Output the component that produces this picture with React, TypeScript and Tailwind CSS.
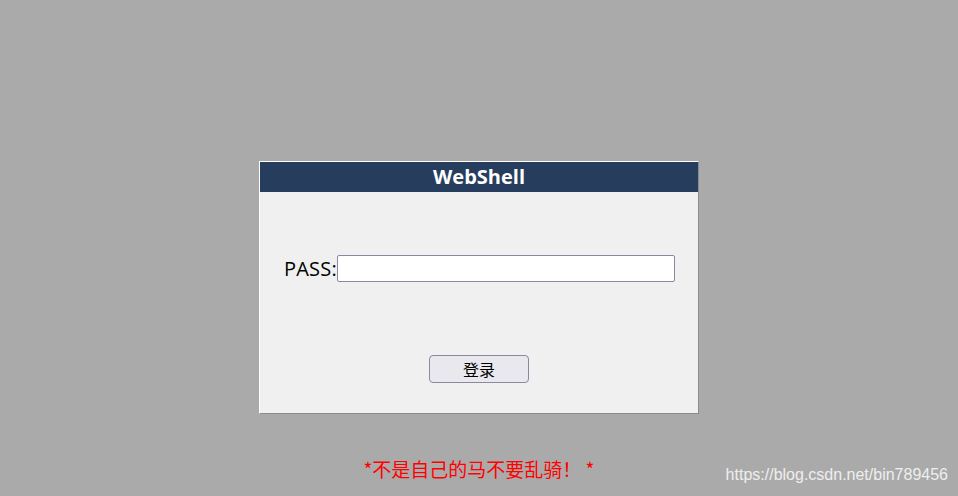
export default function App() {
  return (
    <div className="relative h-[496px] w-full overflow-hidden bg-[#aaaaaa] font-['Open_Sans','Noto_Sans_CJK_SC',sans-serif]">
      <div className="flex flex-col items-center pt-[161px]">
        <div className="w-[440px] border border-t-white border-l-white border-r-[#8c8c8c] border-b-[#8c8c8c] bg-[#f0f0f0]">
          <div className="flex h-[30px] items-center justify-center bg-[#273d5e] text-[20px] font-bold text-white">
            WebShell
          </div>
          <div className="flex flex-col items-center pt-[63px] pb-[30px]">
            <div className="flex w-full items-center pl-[24px]">
              <label className="text-[20px] leading-[27px] tracking-[0.2px] text-black">PASS:</label>
              <input
                type="password"
                className="h-[27px] w-[338px] rounded-[2px] border border-[#8a8a9e] bg-white px-1 outline-none"
              />
            </div>
            <button className="mt-[73px] h-[28px] w-[100px] rounded-[4px] border border-[#8a8a9e] bg-[#e8e8ee] text-[16px] text-black font-['Noto_Sans_CJK_SC',sans-serif]">
              登录
            </button>
          </div>
        </div>
        <p className="mt-[43px] text-[19px] leading-[24px] text-[#ff0000] font-['Noto_Sans_CJK_SC',sans-serif]">
          *不是自己的马不要乱骑！ *
        </p>
      </div>
      <span className="absolute right-[10px] bottom-[9px] text-[16px] text-white/80 font-['Liberation_Sans',sans-serif]">
        https://blog.csdn.net/bin789456
      </span>
    </div>
  );
}
